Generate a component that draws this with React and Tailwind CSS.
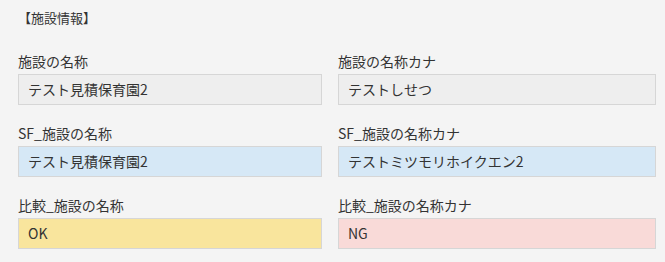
import React from 'react';

const fields = [
  { label: '施設の名称', value: 'テスト見積保育園2', tone: 'bg-[#eeeeee]' },
  { label: '施設の名称カナ', value: 'テストしせつ', tone: 'bg-[#eeeeee]' },
  { label: 'SF_施設の名称', value: 'テスト見積保育園2', tone: 'bg-[#d6e8f6]' },
  { label: 'SF_施設の名称カナ', value: 'テストミツモリホイクエン2', tone: 'bg-[#d6e8f6]' },
  { label: '比較_施設の名称', value: 'OK', tone: 'bg-[#f9e59d]' },
  { label: '比較_施設の名称カナ', value: 'NG', tone: 'bg-[#f9dad8]' },
];

const Field = ({ label, value, tone }) => (
  <div className="flex flex-col">
    <label className="h-[22px] leading-[22px] text-[14px] text-[#333333]">{label}</label>
    <div
      className={`mt-[2px] h-[31px] border border-[#d6d6d6] ${tone} px-[9px] flex items-center text-[14px] text-[#333333]`}
    >
      {value}
    </div>
  </div>
);

export default function App() {
  return (
    <div
      className="w-[665px] h-[262px] bg-[#f4f4f4] px-[18px] pt-[7px]"
      style={{ fontFamily: '"Noto Sans CJK JP", "Noto Sans", sans-serif' }}
    >
      <div className="h-[22px] leading-[22px] text-[13px] text-[#333333]">【施設情報】</div>
      <div className="mt-[21px] grid grid-cols-[304px_318px] gap-x-[16px] gap-y-[17px]">
        {fields.map((f) => (
          <Field key={f.label} {...f} />
        ))}
      </div>
    </div>
  );
}
